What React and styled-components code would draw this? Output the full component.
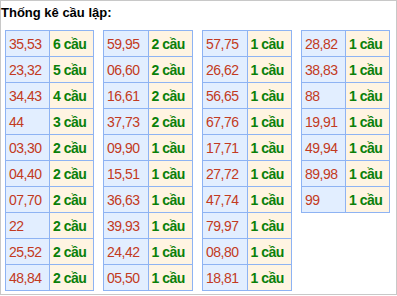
import React from 'react'
import styled, { createGlobalStyle } from 'styled-components';

const GlobalStyle = createGlobalStyle`
  body {
    margin: 0;
    background: #fff;
    font-family: Arial, "Liberation Sans", sans-serif;
  }
`;

const Wrapper = styled.div`
  box-sizing: border-box;
  width: 397px;
  height: 295px;
  border: 1px solid #c8c8c8;
`;

const Title = styled.div`
  margin: 4px 0 0 0;
  font-size: 13px;
  line-height: 15px;
  font-weight: bold;
  color: #000;
`;

const Tables = styled.div`
  display: flex;
  align-items: flex-start;
  gap: 9px;
  padding: 10px 0 0 4px;
`;

const Table = styled.table`
  border-collapse: collapse;
  width: ${({ $w }) => $w}px;
  table-layout: fixed;
  border: 1px solid #8eb3f3;
`;

const Cell = styled.td`
  border: 1px solid #8eb3f3;
  height: 25px;
  padding: 0 0 0 3px;
  font-size: 14px;
  letter-spacing: -0.5px;
  box-sizing: content-box;
  white-space: nowrap;
`;

const NumCell = styled(Cell)`
  background: #e2eeff;
  color: #c23a22;
`;

const CountCell = styled(Cell)`
  background: #fff4e2;
  color: #0a800a;
  font-weight: bold;
`;

const columns = [
  [['35,53', 6], ['23,32', 5], ['34,43', 4], ['44', 3], ['03,30', 2], ['04,40', 2], ['07,70', 2], ['22', 2], ['25,52', 2], ['48,84', 2]],
  [['59,95', 2], ['06,60', 2], ['16,61', 2], ['37,73', 2], ['09,90', 1], ['15,51', 1], ['36,63', 1], ['39,93', 1], ['24,42', 1], ['05,50', 1]],
  [['57,75', 1], ['26,62', 1], ['56,65', 1], ['67,76', 1], ['17,71', 1], ['27,72', 1], ['47,74', 1], ['79,97', 1], ['08,80', 1], ['18,81', 1]],
  [['28,82', 1], ['38,83', 1], ['88', 1], ['19,91', 1], ['49,94', 1], ['89,98', 1], ['99', 1]],
];

const widths = [89, 90, 90, 89];

export default function App() {
  return (
    <>
      <GlobalStyle />
      <Wrapper>
        <Title>Thống kê cầu lập:</Title>
        <Tables>
          {columns.map((rows, i) => (
            <Table key={i} $w={widths[i]}>
              <tbody>
                {rows.map(([pair, n]) => (
                  <tr key={pair}>
                    <NumCell>{pair}</NumCell>
                    <CountCell>{n} cầu</CountCell>
                  </tr>
                ))}
              </tbody>
            </Table>
          ))}
        </Tables>
      </Wrapper>
    </>
  );
}
